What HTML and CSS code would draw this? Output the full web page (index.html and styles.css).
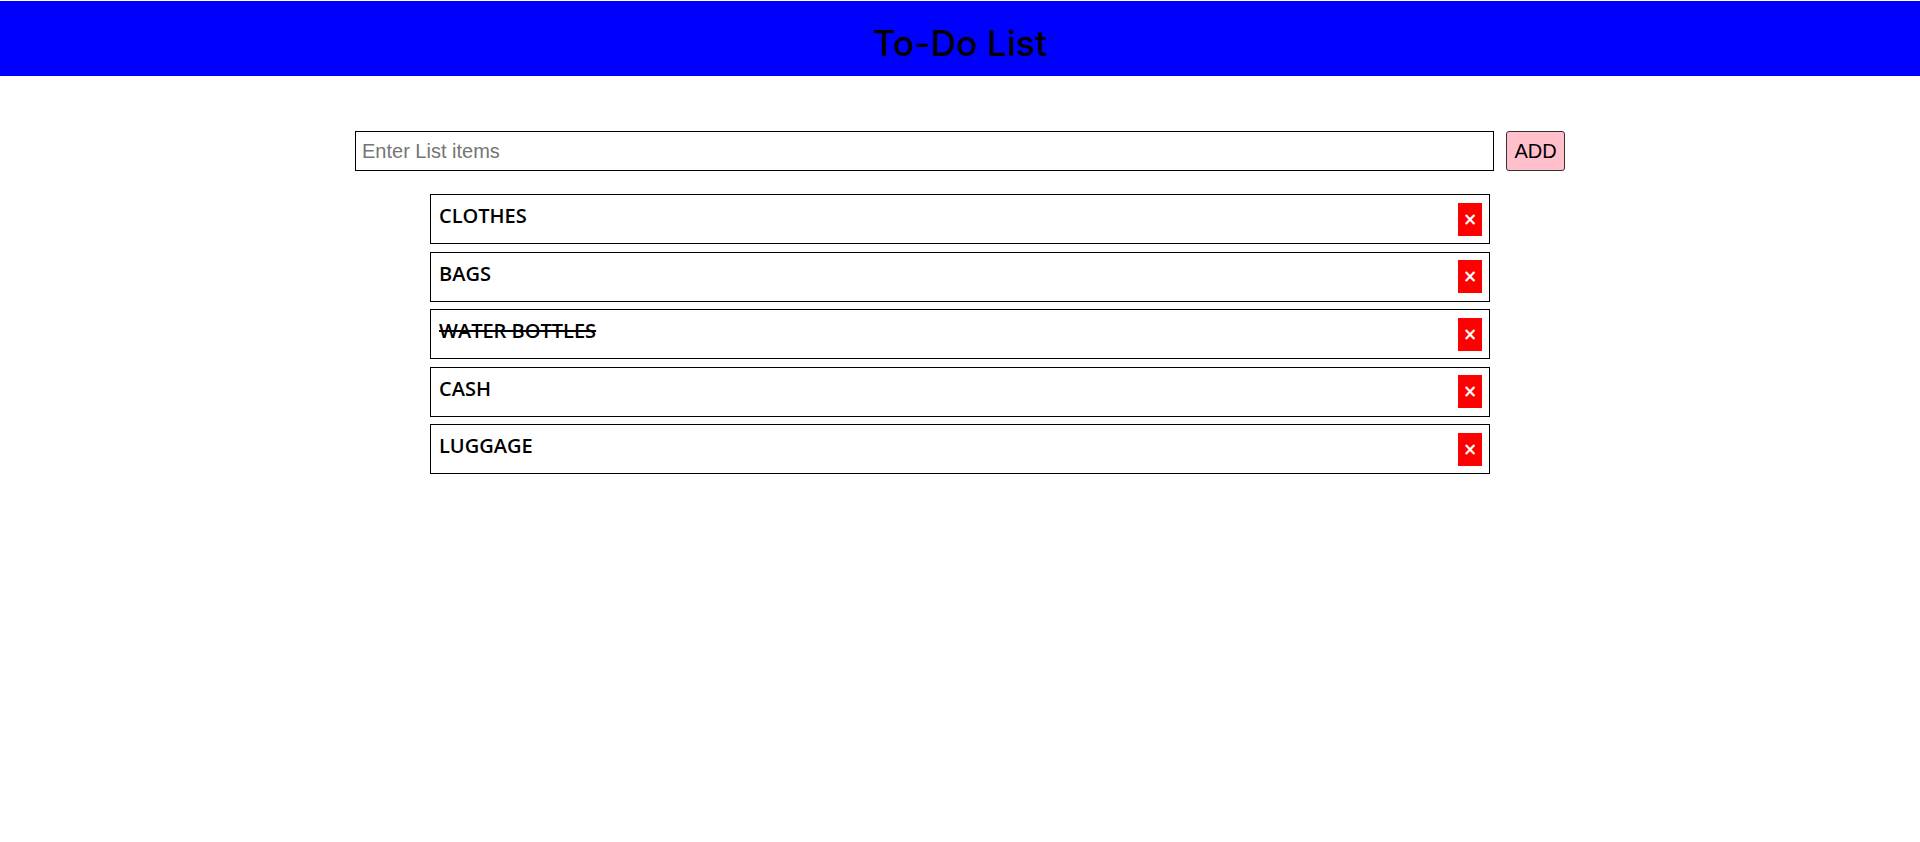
FILE: index.html
```html
<!DOCTYPE html>
<html lang="en">
<head>
<meta charset="utf-8">
<title>To-Do List</title>
<link rel="stylesheet" href="styles.css">
</head>
<body>
<header class="header">
  <h1 class="title">To-Do List</h1>
</header>
<main class="main">
  <div class="entry">
    <input class="entry-input" type="text" placeholder="Enter List items">
    <button class="entry-add">ADD</button>
  </div>
  <ul class="list">
    <li class="item"><span class="item-text">CLOTHES</span><button class="item-del">×</button></li>
    <li class="item"><span class="item-text">BAGS</span><button class="item-del">×</button></li>
    <li class="item"><span class="item-text item-done">WATER BOTTLES</span><button class="item-del">×</button></li>
    <li class="item"><span class="item-text">CASH</span><button class="item-del">×</button></li>
    <li class="item"><span class="item-text">LUGGAGE</span><button class="item-del">×</button></li>
  </ul>
</main>
</body>
</html>
```

FILE: styles.css
```css
html, body {
  margin: 0;
  padding: 0;
  background: #ffffff;
}

body {
  font-family: "Liberation Sans", Arial, sans-serif;
}

.header {
  margin-top: 1px;
  height: 75px;
  background: #0000ff;
  display: flex;
  align-items: center;
  justify-content: center;
}

.title {
  margin: 8px 0 0 0;
  font-family: Inter, "Noto Sans", sans-serif;
  font-weight: 500;
  font-size: 35px;
  color: #000000;
  letter-spacing: 0.2px;
}

.main {
  display: flex;
  flex-direction: column;
  align-items: center;
  padding-top: 55px;
}

.entry {
  display: flex;
  gap: 12px;
  width: 1210px;
}

.entry-input {
  flex: 1;
  height: 40px;
  box-sizing: border-box;
  border: 1px solid #000000;
  border-radius: 0;
  padding: 0 6px;
  font-family: "Liberation Sans", Arial, sans-serif;
  font-size: 20px;
  outline: none;
}

.entry-input::placeholder {
  color: #757575;
}

.entry-add {
  width: 59px;
  height: 40px;
  box-sizing: border-box;
  background: #ffc0cb;
  border: 1px solid #333333;
  border-radius: 3px;
  padding: 0;
  font-family: "Liberation Sans", Arial, sans-serif;
  font-size: 20px;
  color: #000000;
}

.list {
  list-style: none;
  margin: 23px 0 0 0;
  padding: 0;
  width: 1060px;
  display: flex;
  flex-direction: column;
  gap: 7.5px;
}

.item {
  display: flex;
  justify-content: space-between;
  align-items: center;
  height: 50px;
  box-sizing: border-box;
  border: 1px solid #000000;
  padding: 0 7px 0 8px;
}

.item-text {
  font-family: "Open Sans", sans-serif;
  font-weight: 600;
  font-size: 20px;
  color: #000000;
  margin-top: -7px;
}

.item-done {
  text-decoration: line-through;
}

.item-del {
  width: 24px;
  height: 33px;
  background: #ff0000;
  border: none;
  padding: 0;
  color: #ffffff;
  font-family: "DejaVu Sans", sans-serif;
  font-weight: 700;
  font-size: 17px;
  line-height: 33px;
}
```
